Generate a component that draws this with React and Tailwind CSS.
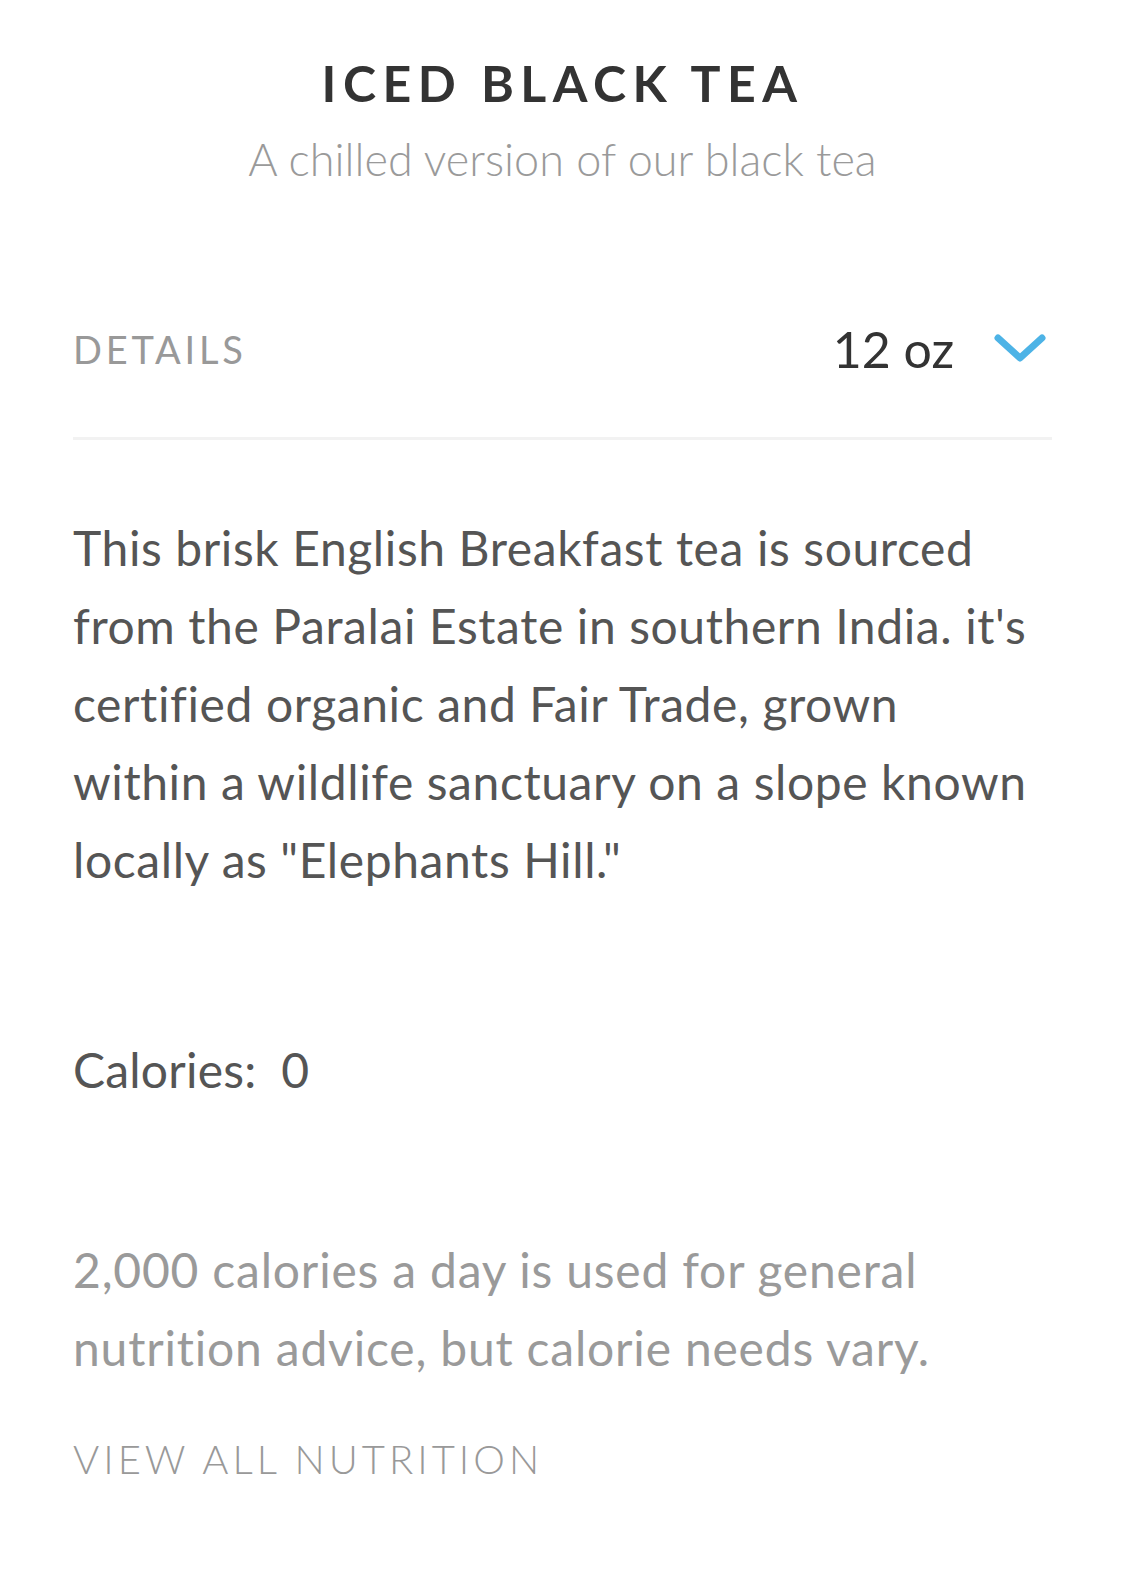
export default function App() {
  const font = { fontFamily: "Lato, 'Open Sans', sans-serif" };

  return (
    <div className="min-h-screen w-[1125px] bg-white" style={font}>
      <header className="flex flex-col items-center pt-[53px]">
        <h1 className="text-[50px] leading-[60px] font-bold tracking-[0.13em] text-[#333333]">ICED BLACK TEA</h1>
        <p className="mt-[20px] text-[45px] leading-[52px] font-light text-[#9a9a9a]">A chilled version of our black tea</p>
      </header>

      <main className="px-[73px]">
        <div className="mt-[114px] flex h-[100px] items-center justify-between">
          <span className="text-[38px] leading-[48px] tracking-[0.1em] text-[#999999]">DETAILS</span>
          <button className="mr-[6px] flex items-center gap-[40px]">
            <span className="text-[50px] leading-[56px] text-[#333333]">12 oz</span>
            <svg width="52" height="34" viewBox="0 0 52 34" fill="none">
              <path d="M4 6 L26 26 L48 6" stroke="#4db3e6" strokeWidth="7" strokeLinecap="round" strokeLinejoin="round" />
            </svg>
          </button>
        </div>
        <div className="mt-[38px] h-[3px] bg-[#f2f2f2]" />

        <p className="mt-[69px] text-[48px] leading-[78px] tracking-[0.6px] text-[#555555]">
          This brisk English Breakfast tea is sourced<br />
          from the Paralai Estate in southern India. it's<br />
          certified organic and Fair Trade, grown<br />
          within a wildlife sanctuary on a slope known<br />
          locally as "Elephants Hill."
        </p>

        <p className="mt-[132px] text-[48px] leading-[78px] tracking-[0.2px] text-[#555555]">Calories:&nbsp; 0</p>

        <p className="mt-[122px] text-[48px] leading-[78px] tracking-[0.8px] text-[#9a9a9a]">
          2,000 calories a day is used for general<br />
          nutrition advice, but calorie needs vary.
        </p>

        <a href="#" className="mt-[47px] block text-[40px] leading-[50px] font-light tracking-[0.1em] text-[#999999]">VIEW ALL NUTRITION</a>
      </main>
    </div>
  );
}
